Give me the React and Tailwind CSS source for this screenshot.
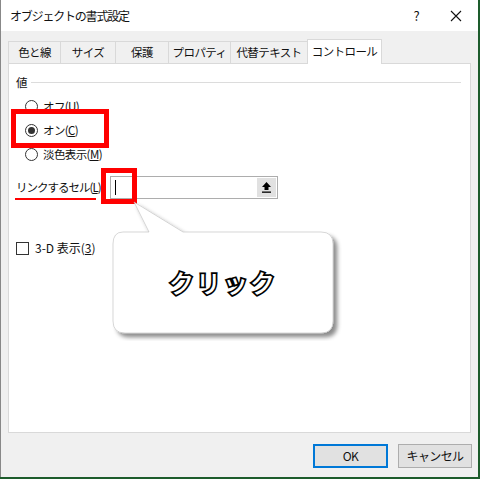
import React from "react";

const tabs = ["色と線", "サイズ", "保護", "プロパティ", "代替テキスト", "コントロール"];
const tabWidths = ["w-[52px]", "w-[55px]", "w-[53px]", "w-[62px]", "w-[77px]", "w-[75px]"];

const Radio = ({ checked, label, mnemonic }) => (
  <div className="flex items-center gap-[5px] h-[20px]">
    <span className="w-[13px] h-[13px] rounded-full border border-[#333] bg-white flex items-center justify-center">
      {checked && <span className="w-[7px] h-[7px] rounded-full bg-[#333]" />}
    </span>
    <span>
      {label}(<span className="underline">{mnemonic}</span>)
    </span>
  </div>
);

export default function App() {
  return (
    <div className="w-[480px] h-[479px] bg-[#1d5c2c] font-['Noto_Sans_CJK_JP','Noto_Sans',sans-serif] text-[11.5px] tracking-[-0.6px] text-[#111] overflow-hidden">
      <div className="relative w-[478px] h-[477px] bg-[#f0f0f0] border-l border-[#888] flex flex-col">
        {/* Title bar */}
        <div className="h-[31px] bg-white flex items-center pl-[9px] shrink-0">
          <span className="text-[12px] tracking-[-1.2px]">オブジェクトの書式設定</span>
          <span className="ml-auto mr-[31px] text-[13px]">?</span>
          <svg width="12" height="12" viewBox="0 0 12 12" className="mr-[16px]">
            <path d="M1 1 L11 11 M11 1 L1 11" stroke="#111" strokeWidth="1.1" />
          </svg>
        </div>

        {/* Tabs */}
        <div className="flex items-end pl-[7px] pt-[8px] h-[32px] shrink-0">
          {tabs.map((t, i) =>
            i === tabs.length - 1 ? (
              <div
                key={t}
                className={`${tabWidths[i]} h-[25px] bg-white border border-b-0 border-[#d9d9d9] flex items-center justify-center relative z-10 -mb-px`}
              >
                {t}
              </div>
            ) : (
              <div
                key={t}
                className={`${tabWidths[i]} h-[22px] bg-[#f0f0f0] border border-b-0 border-r-0 border-[#d9d9d9] flex items-center justify-center`}
              >
                {t}
              </div>
            )
          )}
        </div>

        {/* Panel */}
        <div className="mx-[7px] w-[463px] h-[370px] bg-white border border-[#d9d9d9] shrink-0 relative px-[7px] pt-[10px]">
          <div className="flex items-center gap-[4px]">
            <span>値</span>
            <span className="flex-1 h-px bg-[#dcdcdc] mr-[2px]" />
          </div>
          <div className="pl-[9px] mt-[5px] flex flex-col gap-[4px]">
            <Radio label="オフ" mnemonic="U" />
            <Radio checked label="オン" mnemonic="C" />
            <Radio label="淡色表示" mnemonic="M" />
          </div>

          <div className="flex items-center mt-[11px] h-[24px]">
            <span className="w-[94px] whitespace-nowrap tracking-[-1px]">
              リンクするセル(<span className="underline">L</span>):
            </span>
            <div className="w-[168px] h-[23px] border border-[#adadad] flex items-center pl-[4px] pr-px">
              <span className="w-px h-[15px] bg-black" />
              <div className="ml-auto w-[19px] h-[19px] bg-[#e1e1e1] flex items-center justify-center">
                <svg width="11" height="12" viewBox="0 0 11 12">
                  <path d="M5.5 1 L10 6 H7.5 V9 H3.5 V6 H1 Z" fill="#000" />
                  <rect x="1" y="10.5" width="9" height="1.3" fill="#000" />
                </svg>
              </div>
            </div>
          </div>

          <div className="flex items-center gap-[6px] mt-[40px]">
            <span className="w-[13px] h-[13px] border border-[#333] bg-white" />
            <span className="text-[12px] tracking-normal">
              3-D 表示(<span className="underline">3</span>)
            </span>
          </div>
        </div>

        {/* Buttons */}
        <div className="flex justify-end gap-[10px] pr-[6px] mt-[11px]">
          <button className="w-[75px] h-[24px] bg-[#e1e1e1] border-2 border-[#0078d7] text-[12px]">
            OK
          </button>
          <button className="w-[74px] h-[24px] bg-[#e1e1e1] border border-[#adadad] text-[12px]">
            キャンセル
          </button>
        </div>

        {/* Annotations */}
        <div className="absolute left-[10px] top-[109px] w-[98px] h-[39px] border-[5px] border-[#ff0000]" />
        <div className="absolute left-[100px] top-[168px] w-[36px] h-[36px] border-[5px] border-[#ff0000]" />
        <div className="absolute left-[14px] top-[198px] w-[81px] h-[2px] bg-[#ff0000]" />

        {/* Callout */}
        <svg className="absolute left-[100px] top-[196px]" width="250" height="145" viewBox="0 0 250 145">
          <defs>
            <filter id="sh" x="-10%" y="-10%" width="130%" height="130%">
              <feDropShadow dx="4" dy="4" stdDeviation="2" floodColor="#000" floodOpacity="0.45" />
            </filter>
          </defs>
          <path
            d="M22 36 H48 L33 6 L82 36 H220 Q232 36 232 48 V125 Q232 137 220 137 H24 Q12 137 12 125 V48 Q12 36 22 36 Z"
            fill="#fff"
            stroke="#bdbdbd"
            strokeWidth="0.6"
            filter="url(#sh)"
          />
        </svg>
        <div className="absolute left-[112px] top-[232px] w-[220px] h-[101px] flex items-center justify-center">
          <span className="text-[25px] font-medium tracking-[2px] text-white [-webkit-text-stroke:3.5px_#000] [paint-order:stroke_fill] font-['Noto_Sans_CJK_JP',sans-serif]">
            クリック
          </span>
        </div>
      </div>
    </div>
  );
}
